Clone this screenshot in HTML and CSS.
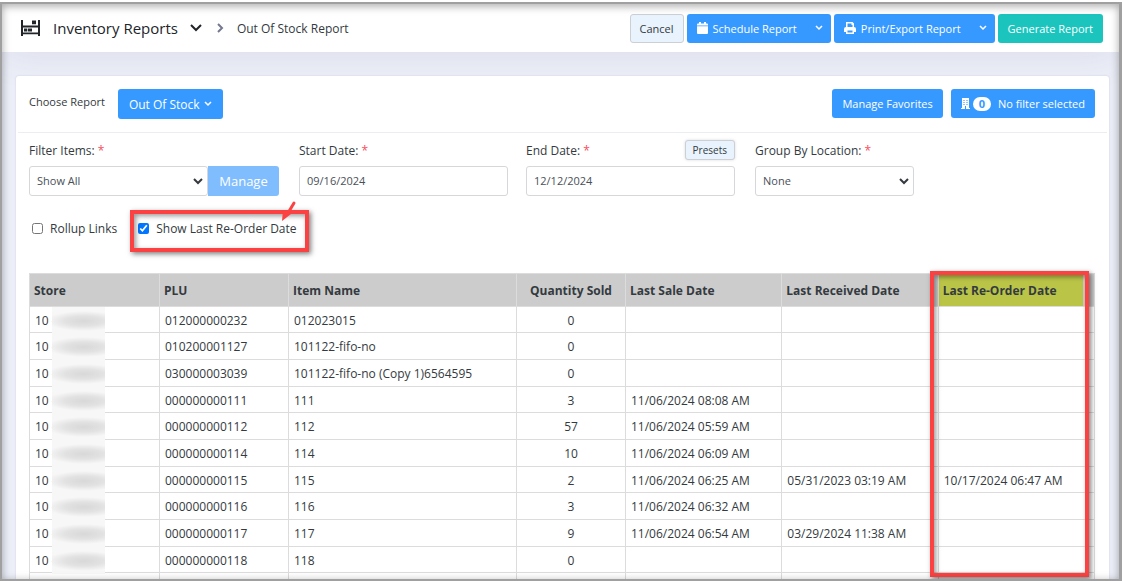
FILE: index.html
```html
<!DOCTYPE html>
<html lang="en">
<head>
    <meta charset="UTF-8">
    <meta name="viewport" content="width=device-width, initial-scale=1.0">
    <title>Out Of Stock Report</title>
    <link rel="stylesheet" href="styles.css">
</head>
<body>
    <div class="frame">
        <header class="topbar">
            <svg class="shelf-icon" width="20" height="16" viewBox="0 0 20 16" fill="#212529">
                <path d="M0 0h2v16H0zM17 0h2v16h-2zM2 5.500h15v2H2zM2 12.500h15v1.700H2z"/>
                <path d="M3 8.500h3.300v3H3zM7 8.500h4v3H7zM11 0.500h4v3.700h-4z"/>
            </svg>
            <h1>Inventory Reports</h1>
            <svg class="title-caret" width="12" height="8" viewBox="0 0 12 8" fill="none" stroke="#212529" stroke-width="2"><path d="M1 1l5 5 5-5"/></svg>
            <svg class="crumb-arrow" width="7" height="10" viewBox="0 0 7 10" fill="none" stroke="#74788d" stroke-width="2"><path d="M1 1l4 4-4 4"/></svg>
            <span class="crumb">Out Of Stock Report</span>

            <div class="actions">
                <button class="btn btn-light">Cancel</button>
                <div class="btn-group">
                    <button class="btn btn-blue">
                        <svg class="btn-icon" width="11" height="12" viewBox="0 0 11 12" fill="#fff"><path d="M0 3.500V2.500Q0 1.500 1 1.500H2V0H4V1.500H7V0H9V1.500H10Q11 1.500 11 2.500V3.500zM0 4.200H11V11Q11 12 10 12H1Q0 12 0 11z"/></svg>
                        Schedule Report
                    </button>
                    <button class="btn btn-blue btn-split" aria-label="Schedule options">
                        <svg width="8" height="6" viewBox="0 0 8 6" fill="none" stroke="#fff" stroke-width="1.500"><path d="M1 1l3 3 3-3"/></svg>
                    </button>
                </div>
                <div class="btn-group">
                    <button class="btn btn-blue">
                        <svg class="btn-icon" width="12" height="12" viewBox="0 0 12 12" fill="#fff"><path fill-rule="evenodd" d="M2 0H8.500L10 1.500V5Q12 5 12 7V10H10V12H2V10H0V7Q0 5 2 5zM3.500 1.500V5H8.500V3H7.500V1.500zM3.500 8.500V10.500H8.500V8.500z"/></svg>
                        Print/Export Report
                    </button>
                    <button class="btn btn-blue btn-split" aria-label="Print options">
                        <svg width="8" height="6" viewBox="0 0 8 6" fill="none" stroke="#fff" stroke-width="1.500"><path d="M1 1l3 3 3-3"/></svg>
                    </button>
                </div>
                <button class="btn btn-green">Generate Report</button>
            </div>
        </header>

        <main class="card">
            <div class="report-row">
                <span class="choose">Choose Report</span>
                <button class="btn btn-blue btn-report">
                    Out Of Stock
                    <svg width="8" height="6" viewBox="0 0 8 6" fill="none" stroke="#fff" stroke-width="1.500"><path d="M1 1l3 3 3-3"/></svg>
                </button>
                <div class="report-tools">
                    <button class="btn btn-blue">Manage Favorites</button>
                    <button class="btn btn-blue">
                        <svg width="9" height="11" viewBox="0 0 9 11"><path fill="#fff" d="M1 0h7v10h1v1H5V8H4v3H0v-1h1z"/><path fill="#3699ff" opacity=".55" d="M2 2h2v1H2zM5 2h2v1H5zM2 4h2v1H2zM5 4h2v1H5zM2 6h2v1H2zM5 6h2v1H5z"/></svg>
                        <span class="count">0</span>
                        No filter selected
                    </button>
                </div>
            </div>

            <div class="filters">
                <div class="field field-items">
                    <label for="items">Filter Items: <span class="req">*</span></label>
                    <div class="input-group">
                        <div class="select-wrap">
                            <select id="items"><option>Show All</option></select>
                            <svg class="select-caret" width="10" height="7" viewBox="0 0 10 7" fill="none" stroke="#343a40" stroke-width="2"><path d="M1 1l4 4 4-4"/></svg>
                        </div>
                        <button class="btn btn-manage">Manage</button>
                    </div>
                </div>
                <div class="field field-date">
                    <label for="start">Start Date: <span class="req">*</span></label>
                    <input type="text" id="start" value="09/16/2024">
                </div>
                <div class="field field-date">
                    <div class="label-row">
                        <label for="end">End Date: <span class="req">*</span></label>
                        <button class="btn btn-light btn-presets">Presets</button>
                    </div>
                    <input type="text" id="end" value="12/12/2024">
                </div>
                <div class="field field-group">
                    <label for="group">Group By Location: <span class="req">*</span></label>
                    <div class="select-wrap">
                        <select id="group"><option>None</option></select>
                        <svg class="select-caret" width="10" height="7" viewBox="0 0 10 7" fill="none" stroke="#343a40" stroke-width="2"><path d="M1 1l4 4 4-4"/></svg>
                    </div>
                </div>
            </div>

            <div class="checks">
                <label class="check"><input type="checkbox"> Rollup Links</label>
                <div class="check-marked">
                    <label class="check"><input type="checkbox" checked> Show Last Re-Order Date</label>
                    <div class="mark mark-check"></div>
                    <svg class="mark-arrow" width="18" height="24" viewBox="0 0 18 24"><path d="M13 4L7 14" stroke="#fb4141" stroke-width="3" stroke-linecap="round"/><path d="M1 22L2 11 10 15z" fill="#fb4141"/></svg>
                </div>
            </div>

            <div class="table-wrap">
                <table class="report">
                    <colgroup>
                        <col class="col-store"><col class="col-plu"><col class="col-name"><col class="col-qty"><col class="col-date"><col class="col-date"><col class="col-date">
                    </colgroup>
                    <thead>
                        <tr><th>Store</th><th>PLU</th><th>Item Name</th><th class="qty">Quantity Sold</th><th>Last Sale Date</th><th>Last Received Date</th><th class="marked">Last Re-Order Date</th></tr>
                    </thead>
                    <tbody>
                        <tr><td class="store">10 -<i class="smudge"></i></td><td>012000000232</td><td>012023015</td><td class="qty">0</td><td></td><td></td><td></td></tr>
                        <tr><td class="store">10 -<i class="smudge"></i></td><td>010200001127</td><td>101122-fifo-no</td><td class="qty">0</td><td></td><td></td><td></td></tr>
                        <tr><td class="store">10 -<i class="smudge"></i></td><td>030000003039</td><td>101122-fifo-no (Copy 1)6564595</td><td class="qty">0</td><td></td><td></td><td></td></tr>
                        <tr><td class="store">10 -<i class="smudge"></i></td><td>000000000111</td><td>111</td><td class="qty">3</td><td>11/06/2024 08:08 AM</td><td></td><td></td></tr>
                        <tr><td class="store">10 -<i class="smudge"></i></td><td>000000000112</td><td>112</td><td class="qty">57</td><td>11/06/2024 05:59 AM</td><td></td><td></td></tr>
                        <tr><td class="store">10 -<i class="smudge"></i></td><td>000000000114</td><td>114</td><td class="qty">10</td><td>11/06/2024 06:09 AM</td><td></td><td></td></tr>
                        <tr><td class="store">10 -<i class="smudge"></i></td><td>000000000115</td><td>115</td><td class="qty">2</td><td>11/06/2024 06:25 AM</td><td>05/31/2023 03:19 AM</td><td>10/17/2024 06:47 AM</td></tr>
                        <tr><td class="store">10 -<i class="smudge"></i></td><td>000000000116</td><td>116</td><td class="qty">3</td><td>11/06/2024 06:32 AM</td><td></td><td></td></tr>
                        <tr><td class="store">10 -<i class="smudge"></i></td><td>000000000117</td><td>117</td><td class="qty">9</td><td>11/06/2024 06:54 AM</td><td>03/29/2024 11:38 AM</td><td></td></tr>
                        <tr><td class="store">10 -<i class="smudge"></i></td><td>000000000118</td><td>118</td><td class="qty">0</td><td></td><td></td><td></td></tr>
                        <tr><td></td><td></td><td></td><td></td><td></td><td></td><td></td></tr>
                    </tbody>
                </table>
                <div class="mark mark-column"></div>
            </div>
        </main>
    </div>
</body>
</html>
```
FILE: styles.css
```css
* {
    box-sizing: border-box;
}

body {
    margin: 0;
    padding-top: 2px;
    height: 100vh;
    overflow: hidden;
    background: #fff;
    font-family: "Open Sans", sans-serif;
    font-size: 12px;
    color: #343a40;
}

.frame {
    position: relative;
    height: 100%;
    border: 2px solid #a0a0a0;
    border-right-width: 3px;
    background: #eceff8;
    overflow: hidden;
}

/* soft inner shadow round the whole window */
.frame::after {
    content: "";
    position: absolute;
    inset: 0;
    box-shadow: inset 0 2px 8px rgba(0, 0, 0, 0.35);
    pointer-events: none;
}

.topbar {
    display: flex;
    align-items: center;
    height: 48px;
    padding: 0 16px 0 19px;
    background: #fff;
    box-shadow: 0 0 40px rgba(82, 63, 105, 0.12);
}

h1 {
    margin: 0 12px;
    font-size: 15px;
    font-weight: 400;
    color: #212529;
}

.crumb-arrow {
    margin: 0 13px 0 15px;
}

.actions {
    display: flex;
    gap: 3px;
    margin-left: auto;
}

.btn {
    display: inline-flex;
    align-items: center;
    justify-content: center;
    height: 29px;
    padding: 0 10px;
    border: 0;
    border-radius: 3px;
    font-family: inherit;
    font-size: 11px;
    color: #fff;
    white-space: nowrap;
    cursor: pointer;
}

.btn-blue {
    background: #3699ff;
}

.btn-green {
    background: #1bc5bd;
}

.btn-light {
    padding: 0 9px;
    border: 1px solid #ccd0d4;
    background: #e8f3fd;
    color: #343a40;
}

.btn-group {
    display: flex;
}

.btn-group .btn:first-child {
    border-radius: 3px 0 0 3px;
}

.btn-group .btn-split {
    width: 24px;
    padding: 0;
    border-radius: 0 3px 3px 0;
}

.btn-icon {
    margin-right: 5px;
}

.card {
    margin: 24px 10px 0 14px;
    border-radius: 3px;
    background: #fff;
    box-shadow: 0 0 2px rgba(82, 63, 105, 0.2);
}

.report-row {
    display: flex;
    align-items: flex-start;
    height: 57px;
    margin: 0 2px;
    padding: 13px 12px 0 11px;
    border-bottom: 1px solid #ebedf0;
}

.choose {
    margin: 5px 13px 0 0;
    font-size: 11px;
}

.btn-report {
    height: 30px;
    padding: 0 11px;
    gap: 4px;
    font-size: 12px;
}

.report-tools {
    display: flex;
    gap: 8px;
    margin-left: auto;
}

.count {
    margin: 0 7px 0 3px;
    padding: 0 6px;
    border-radius: 7px;
    background: #fff;
    color: #3699ff;
    font-size: 11px;
    font-weight: 700;
    line-height: 14px;
}

.filters {
    display: flex;
    padding: 7px 13px 0;
}

.field label {
    display: block;
    height: 26px;
    line-height: 22px;
    font-weight: 500;
}

.req {
    color: #f64e60;
}

.field-items {
    width: 250px;
    margin-right: 20px;
}

.field-date {
    width: 209px;
    margin-right: 18px;
}

.field-group {
    width: 159px;
    margin-left: 2px;
}

.input-group,
.label-row {
    display: flex;
    justify-content: space-between;
}

.select-wrap {
    position: relative;
    flex: 1;
}

.field select,
.field input {
    display: block;
    appearance: none;
    width: 100%;
    height: 30px;
    padding: 0 7px 1px;
    border: 1px solid #d5d7da;
    border-radius: 3px;
    background: #fff;
    font-family: inherit;
    font-size: 11px;
    color: #495057;
}

.select-caret {
    position: absolute;
    right: 5px;
    top: 12px;
    pointer-events: none;
}

.btn-manage {
    width: 71px;
    height: 30px;
    padding-bottom: 1px;
    border-radius: 0 3px 3px 0;
    background: #7fbdff;
    font-size: 13px;
}

.btn-presets {
    height: 20px;
    padding: 0 7px;
    font-size: 10px;
    box-shadow: 0 0 3px rgba(0, 0, 0, 0.15);
}

.checks {
    display: flex;
    gap: 21px;
    padding: 23px 16px 0;
}

.check {
    display: flex;
    align-items: center;
    gap: 7px;
    height: 18px;
}

.check input {
    width: 11px;
    height: 11px;
    margin: 0;
}

.check-marked {
    position: relative;
}

/* red call-outs */
.mark {
    position: absolute;
    border: 4px solid #fb4141;
    box-shadow: 2px 2px 5px rgba(0, 0, 0, 0.5), inset 2px 2px 5px rgba(0, 0, 0, 0.4);
    pointer-events: none;
}

.mark-check {
    inset: -9px -12px -15px -8px;
}

.mark-arrow {
    position: absolute;
    right: -2px;
    top: -20px;
}

.table-wrap {
    position: relative;
    margin: 36px 14px 0 13px;
}

.report {
    width: 100%;
    table-layout: fixed;
    border-collapse: collapse;
}

.col-store {
    width: 130px;
}

.col-plu {
    width: 129px;
}

.col-name {
    width: 228px;
}

.col-qty {
    width: 109px;
}

.report th,
.report td {
    height: 27px;
    padding: 2px 5px 0;
    border: 1px solid #dcdcdc;
    line-height: 18px;
    text-align: left;
    white-space: nowrap;
}

.report tbody tr:nth-child(3n + 1) td {
    height: 26px;
}

.report th {
    height: 33px;
    padding: 2px 4px 0;
    background: #ccc;
    font-weight: 700;
}

.report .qty {
    text-align: center;
}

.report .marked {
    background: linear-gradient(#bac548, #bac548) 0 0 / 144px 100% no-repeat #ccc;
}

.store {
    position: relative;
}

/* hidden store names */
.smudge {
    position: absolute;
    left: 22px;
    top: 0;
    width: 53px;
    height: 27px;
    background: radial-gradient(ellipse 38px 10px at 32px 14px, #d8d8d8, #e2e2e2 50%, #f7f7f7);
}

.mark-column {
    top: -2px;
    right: 6px;
    width: 159px;
    height: 306px;
}
```
